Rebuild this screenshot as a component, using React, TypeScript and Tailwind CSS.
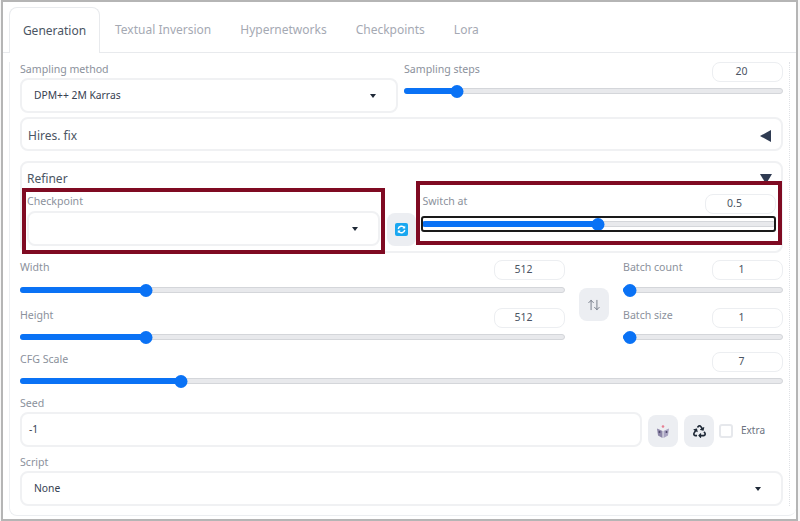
import React from "react";
import { FaRecycle } from "react-icons/fa";
import { ArrowUpDown } from "lucide-react";

function Arrow() {
  return <span className="h-0 w-0 border-x-[3px] border-t-[4px] border-x-transparent border-t-[#1f2937]" />;
}

function Slider({ pct, className = "" }: { pct: number; className?: string }) {
  return (
    <div className={`relative flex h-3 items-center ${className}`}>
      <div className="h-[6px] w-full overflow-hidden rounded-full border border-[#d4d6da] bg-[#e8e9ec]" />
      <div className="absolute h-[6px] rounded-l-full bg-[#0a72f5]" style={{ width: `${pct}%` }} />
      <div className="absolute h-[13px] w-[13px] -translate-x-1/2 rounded-full bg-[#0a72f5]" style={{ left: `${pct}%` }} />
    </div>
  );
}

function NumBox({ value }: { value: string }) {
  return (
    <div className="flex h-5 w-[71px] items-center justify-center rounded-lg border border-[#eceef1] bg-white pr-3 text-[10.5px] text-[#4b5563]">
      {value}
    </div>
  );
}

function Label({ children }: { children: React.ReactNode }) {
  return <span className="block text-[10.6px] leading-[14px] text-[#8b919c]">{children}</span>;
}

function SliderField({
  label,
  value,
  pct,
  className = "",
  sliderClass = "mt-1",
}: {
  label: string;
  value: string;
  pct: number;
  className?: string;
  sliderClass?: string;
}) {
  return (
    <div className={className}>
      <div className="flex h-5 items-start justify-between">
        <Label>{label}</Label>
        <NumBox value={value} />
      </div>
      <Slider pct={pct} className={sliderClass} />
    </div>
  );
}

function Dropdown({ text, className = "" }: { text?: string; className?: string }) {
  return (
    <div className={`flex h-[35px] items-center justify-between rounded-lg border-2 border-[#f0f1f3] bg-white pl-3 pr-5 text-[10.3px] text-[#374151] ${className}`}>
      <span>{text}</span>
      <Arrow />
    </div>
  );
}

function IconBtn({ children, className = "" }: { children: React.ReactNode; className?: string }) {
  return (
    <div className={`flex w-[30px] items-center justify-center rounded-lg bg-[#eceef2] ${className}`}>{children}</div>
  );
}

function Dice() {
  return (
    <svg width="14" height="15" viewBox="0 0 14 15">
      <path d="M1 4.5 6.5 7v7L2 11.5z" fill="#8d86a8" />
      <path d="M13 4.5 7.5 7v7l4.5-2.5z" fill="#a9a3c2" />
      <circle cx="7" cy="2.5" r="1.3" fill="#e77f93" />
      <circle cx="3.5" cy="8" r="1" fill="#4b4568" />
      <circle cx="10.5" cy="8" r="1" fill="#4b4568" />
    </svg>
  );
}

function Refresh() {
  return (
    <svg width="13" height="13" viewBox="0 0 13 13">
      <rect width="13" height="13" rx="2" fill="#1aa7f0" />
      <path d="M3.2 6A3.4 3.4 0 0 1 9.4 4.8M9.8 7A3.4 3.4 0 0 1 3.6 8.2" fill="none" stroke="#fff" strokeWidth="1.4" />
      <path d="M10.2 2.8v2.8H7.4zM2.8 10.2V7.4h2.8z" fill="#fff" />
    </svg>
  );
}

export default function App() {
  return (
    <div className="h-[521px] w-[800px] overflow-hidden bg-[#f7f7f7] pl-px" style={{ fontFamily: '"Noto Sans", sans-serif' }}>
      <div className="relative h-[521px] w-[797px] overflow-hidden border-2 border-[#b5b5b5] bg-white">
        {/* Tabs */}
        <div className="mt-[5px] flex h-[46px] border-b border-[#e8eaed] pl-[6px] text-[12px] text-[#a5a9b3]">
          <div className="-mb-px flex w-[91px] items-center justify-center rounded-t-lg border border-b-0 border-[#e8eaed] bg-white pt-px text-[#4b5563]">Generation</div>
          <div className="ml-[15px] flex items-center pt-px">Textual Inversion</div>
          <div className="ml-[29px] flex items-center pt-px">Hypernetworks</div>
          <div className="ml-[29px] flex items-center pt-px">Checkpoints</div>
          <div className="ml-[29px] flex items-center pt-px">Lora</div>
        </div>
        {/* Panel */}
        <div className="ml-[6px] rounded-b-lg border-b border-l border-[#eceef1] pb-[9px]">
          <div className="mt-[9px] w-[780px] border-r border-[#dfe1e5] pl-[10px] pr-[6px] [border-right-style:dotted]">
            <div className="w-[763px]">
              <div className="flex gap-[6px]">
                <div className="w-[378px]">
                  <div className="h-4"><Label>Sampling method</Label></div>
                  <Dropdown text="DPM++ 2M Karras" />
                </div>
                <SliderField label="Sampling steps" value="20" pct={14} className="w-[379px]" sliderClass="mt-[3px]" />
              </div>

              <div className="mt-1 flex h-[34px] items-center justify-between rounded-lg border-2 border-[#f0f1f3] pl-[6px] pr-[10px] pt-[3px] text-[12px] text-[#4b5563]">
                <span>Hires. fix</span>
                <span className="h-0 w-0 border-y-[6px] border-r-[11px] border-y-transparent border-r-[#2f3b52]" />
              </div>

              <div className="mt-[10px] h-[92px] rounded-lg border-2 border-[#f0f1f3] px-[5px]">
                <div className="flex h-[22px] items-center justify-between pr-[4px] pt-[9px] text-[12px] text-[#4b5563]">
                  <span>Refiner</span>
                  <span className="h-0 w-0 border-x-[6px] border-t-[10px] border-x-transparent border-t-[#2f3b52]" />
                </div>
                <div className="mt-[9px] flex">
                  <div className="w-[353px]">
                    <div className="h-[17px]"><Label>Checkpoint</Label></div>
                    <Dropdown />
                  </div>
                  <IconBtn className="ml-[7px] mt-[19px] h-[33px] w-[28px]"><Refresh /></IconBtn>
                  <SliderField label="Switch at" value="0.5" pct={49.6} className="ml-[6px] w-[354px]" />
                </div>
              </div>

              <div className="mt-[7px] flex">
                <div className="w-[545px]">
                  <SliderField label="Width" value="512" pct={23.2} className="h-12" />
                  <SliderField label="Height" value="512" pct={23.2} sliderClass="mt-[3px]" />
                </div>
                <IconBtn className="ml-[14px] mt-[28px] h-[33px]">
                  <ArrowUpDown size={14} strokeWidth={1.5} className="text-[#6b7280]" />
                </IconBtn>
                <div className="ml-[14px] w-[160px]">
                  <SliderField label="Batch count" value="1" pct={4.4} className="h-12" />
                  <SliderField label="Batch size" value="1" pct={4.4} sliderClass="mt-[3px]" />
                </div>
              </div>

              <SliderField label="CFG Scale" value="7" pct={21.1} className="mt-[9px]" sliderClass="mt-[3px]" />

              <div className="mt-[8px] h-[17px] pt-px"><Label>Seed</Label></div>
              <div className="flex items-start">
                <div className="flex h-[35px] w-[622px] items-center rounded-lg border-2 border-[#f0f1f3] pl-[7px] text-[10.3px] text-[#374151]">-1</div>
                <IconBtn className="ml-[6px] mt-[3px] h-8"><Dice /></IconBtn>
                <IconBtn className="ml-[6px] mt-[3px] h-8"><FaRecycle size={13} className="text-[#1f2937]" /></IconBtn>
                <span className="ml-[5px] mt-[12px] h-[14px] w-[14px] rounded-[3px] border-2 border-[#e6e8ec]" />
                <span className="ml-2 mt-[10px] text-[10px] leading-4 text-[#6b7280]">Extra</span>
              </div>

              <div className="mt-[7px] h-[17px] pt-px"><Label>Script</Label></div>
              <Dropdown text="None" />
            </div>
          </div>
        </div>

        {/* Annotation frames */}
        <div className="absolute left-[19px] top-[186px] h-[66px] w-[363px] border-4 border-[#7f0a22]" />
        <div className="absolute left-[413px] top-[179px] h-[64px] w-[366px] border-4 border-[#7f0a22]" />
        <div className="absolute left-[418px] top-[214px] h-4 w-[355px] rounded-[3px] border-2 border-[#1a1a1a]" />
      </div>
    </div>
  );
}
